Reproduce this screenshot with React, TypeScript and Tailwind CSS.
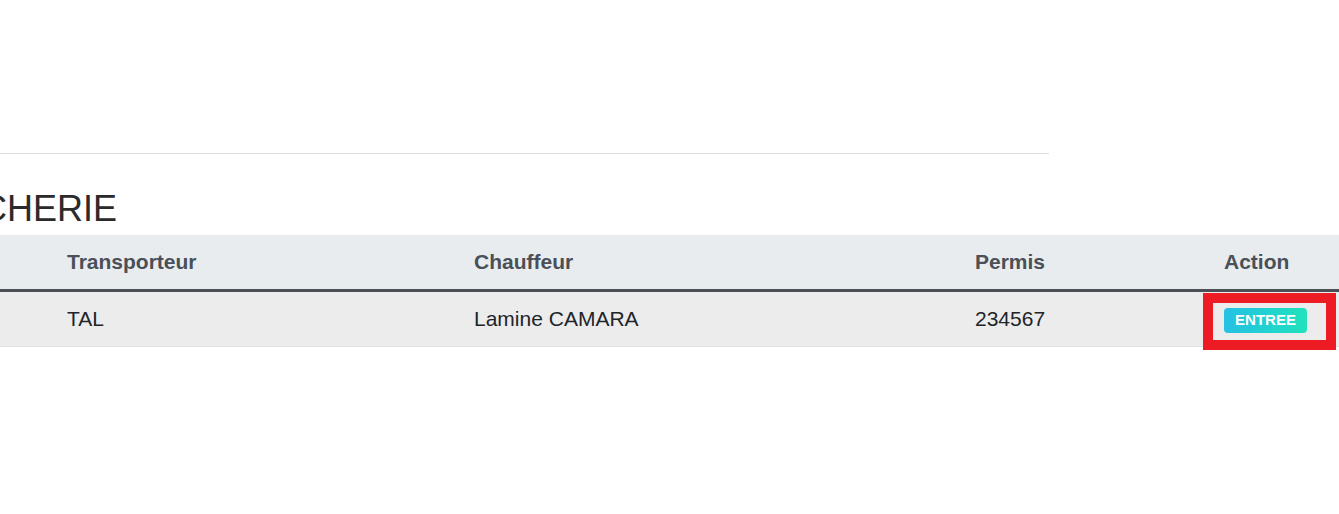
const cols = "grid grid-cols-[55px_407px_501px_249px_127px]";

export default function App() {
  return (
    <div className="w-[1339px] h-[514px] overflow-hidden bg-white text-[#212529] font-['Liberation_Sans',Arial,sans-serif]">
      <div className="h-[154px] w-[1049px] border-b border-[#dedede]"></div>

      {/* Section title */}
      <h2 className="mt-[29px] ml-[-19px] text-[36px] leading-[52px] text-[#2b2b2b] whitespace-nowrap">
        CHERIE
      </h2>

      <div className="w-[1339px]">
        <div className={`${cols} h-[57px] items-center bg-[#e9ecef] border-b-[3px] border-[#4b4f56] text-[21px] font-bold text-[#495057]`}>
          <div></div>
          <div className="px-3">Transporteur</div>
          <div className="px-3">Chauffeur</div>
          <div className="px-3">Permis</div>
          <div className="px-3">Action</div>
        </div>
        <div className={`${cols} h-[55px] items-center bg-[#ececec] border-b border-[#dee2e6] text-[21px]`}>
          <div></div>
          <div className="px-3">TAL</div>
          <div className="px-3">Lamine CAMARA</div>
          <div className="px-3">234567</div>
          <div className="px-3 relative h-full flex items-center">
            <span className="inline-flex items-center justify-center w-[83px] h-[25px] mt-[2px] rounded-[4px] bg-gradient-to-r from-[#26c0e4] to-[#22e2bb] text-white text-[15px] font-bold">
              ENTREE
            </span>
            {/* highlight box */}
            <div className="absolute left-[-9px] top-px w-[133px] h-[57px] border-[10px] border-[#ed1c24]"></div>
          </div>
        </div>
      </div>
    </div>
  );
}
